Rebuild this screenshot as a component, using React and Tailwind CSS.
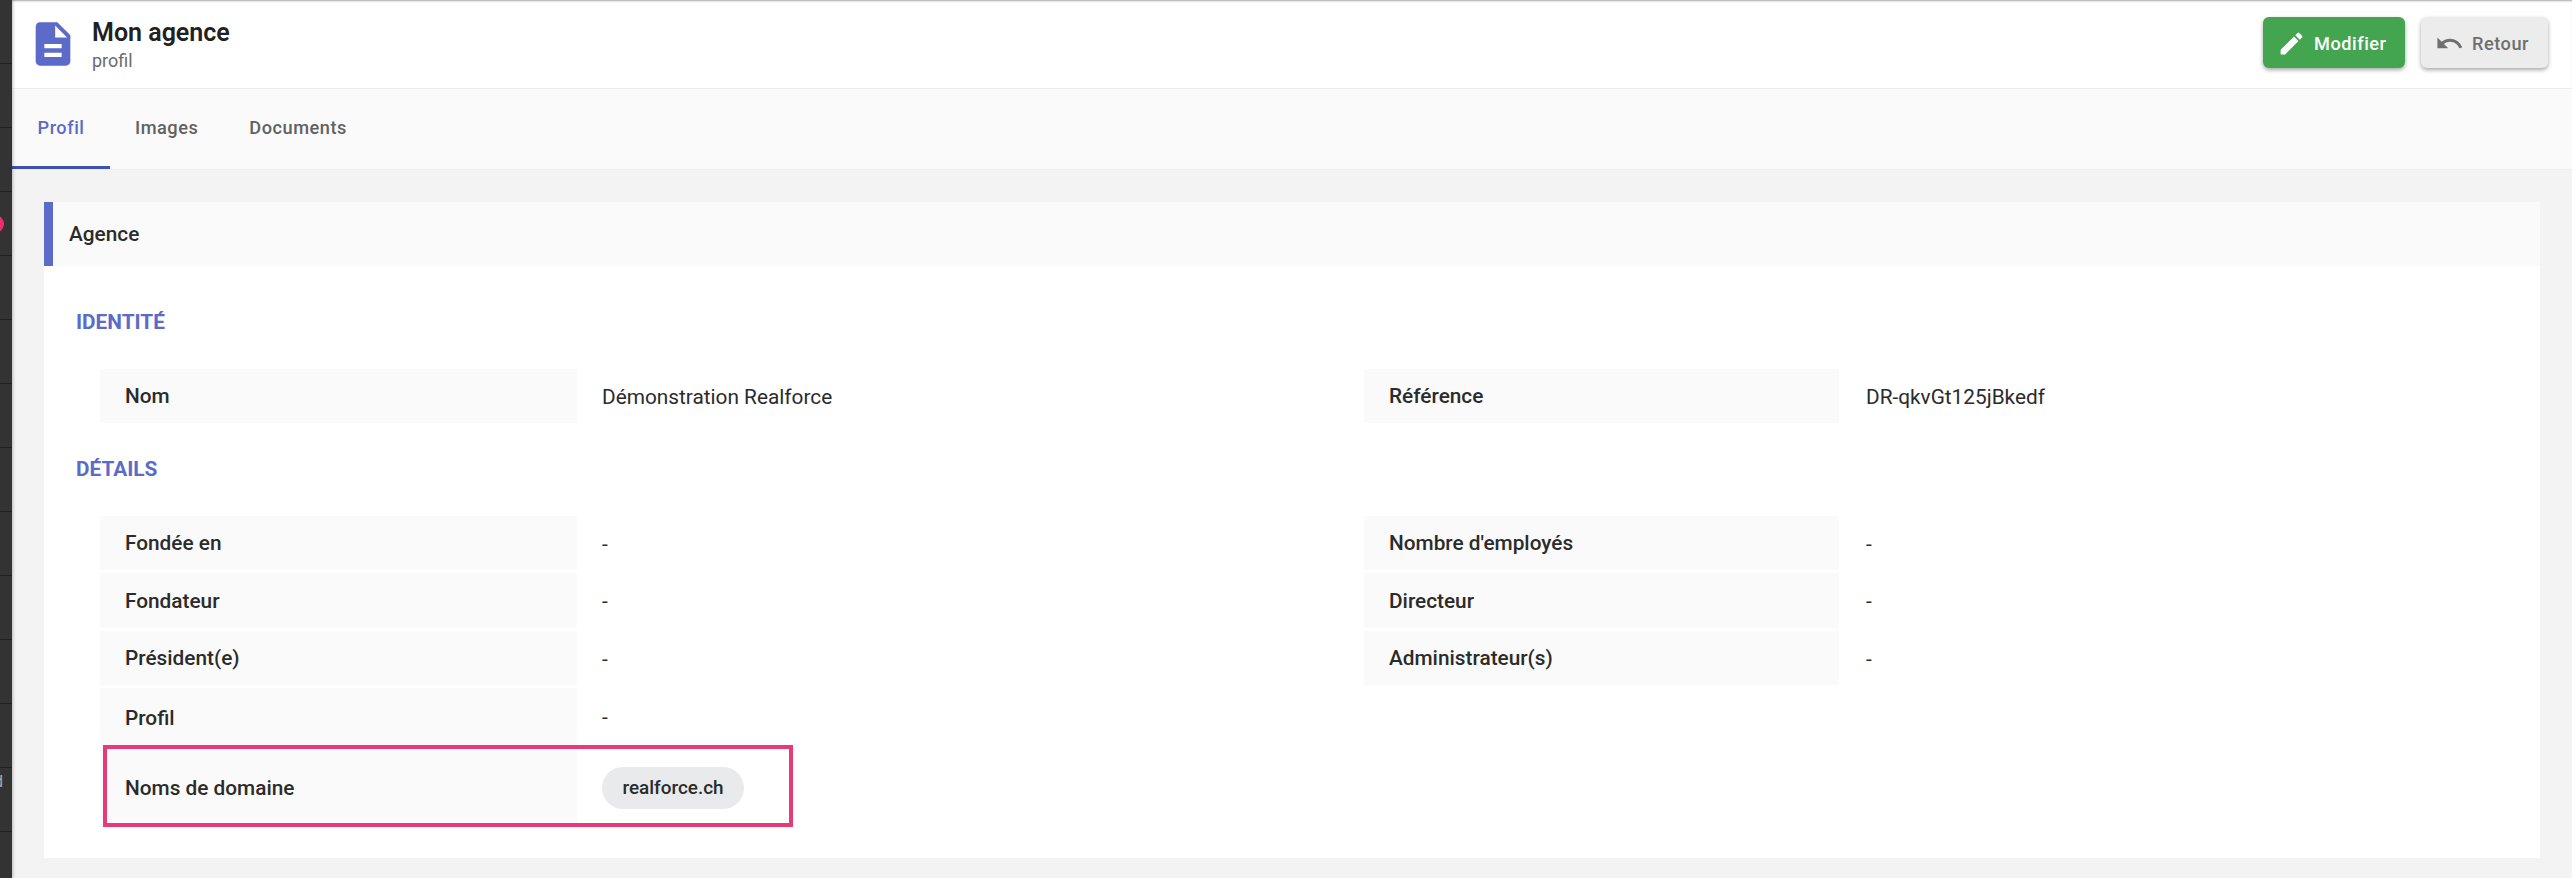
import { MdDescription, MdEdit, MdUndo } from 'react-icons/md';

const sideRows = Array.from({ length: 14 }, (_, i) => i);

function Label({ children, className = 'pt-[2px]' }) {
  return (
    <div className={`flex items-center bg-[#fafafa] pl-[25px] text-[20.8px] font-medium text-[#2b2b2b] ${className}`}>
      {children}
    </div>
  );
}

function Value({ children, className = 'pl-[25px]' }) {
  return <div className={`flex items-center pt-[3px] text-[20.8px] text-[#2b2b2b] ${className}`}>{children}</div>;
}

function SectionTitle({ children, className = '' }) {
  return (
    <h2 className={`h-[30px] pl-[32px] text-[20.8px] leading-[33px] font-bold uppercase text-[#5c6bc8] ${className}`}>
      {children}
    </h2>
  );
}

export default function App() {
  return (
    <div className="flex h-[878px] w-[2572px] overflow-hidden bg-[#f3f3f3] font-['Roboto',sans-serif]">
      {/* Sidebar */}
      <div className="relative z-10 flex w-3 shrink-0 flex-col overflow-hidden bg-[#333333] shadow-[1px_0_3px_rgba(0,0,0,0.25)]">
        {sideRows.map((i) => (
          <div key={i} className="h-16 shrink-0 border-b border-[#222222] pt-[6px] text-[16px] leading-none text-[#aaaaaa]">
            {i === 12 && <span className="-ml-[6px] block">d</span>}
          </div>
        ))}
        <div className="absolute top-[215px] -left-[14px] size-[18px] rounded-full bg-[#ec2f6c]" />
      </div>

      {/* Main */}
      <div className="flex min-w-0 flex-1 flex-col">
        <header className="flex h-[89px] shrink-0 items-center justify-between border-b border-[#ececec] bg-white pr-6 pl-[15px] shadow-[inset_0_2px_2px_-1px_rgba(0,0,0,0.35)]">
          <div className="flex items-center">
            <MdDescription className="size-[52px] text-[#5c6bc8]" />
            <div className="ml-[13px] pt-[4px]">
              <div className="text-[25px] leading-[30px] font-semibold text-[#212121]">Mon agence</div>
              <div className="text-[18px] leading-[26px] text-[#6b6b70]">profil</div>
            </div>
          </div>
          <div className="mb-[4px] flex gap-4 text-[18.2px] font-medium tracking-[0.02857em]">
            <button className="flex h-[51px] w-[142px] items-center gap-2 rounded-md bg-[#43a550] pt-[3px] pl-[14px] text-white shadow-[0_2px_4px_rgba(0,0,0,0.35)]">
              <MdEdit className="size-[29px]" />
              Modifier
            </button>
            <button className="flex h-[51px] w-[127px] items-center gap-2 rounded-md bg-[#ececec] pt-[3px] pl-[14px] text-[#6f6f6f] shadow-[0_2px_4px_rgba(0,0,0,0.35)]">
              <MdUndo className="size-[29px]" />
              Retour
            </button>
          </div>
        </header>

        {/* Tabs */}
        <nav className="flex h-[81px] shrink-0 border-b border-[#efefef] bg-[#fafafa] text-[18.2px] font-medium tracking-[0.02857em] text-[#616161]">
          <div className="flex h-[80px] w-[98px] items-center justify-center border-b-[3px] border-[#3f51b5] text-[#5c6bc8]">Profil</div>
          <div className="ml-[25px] flex items-center pb-[3px]">Images</div>
          <div className="ml-[51px] flex items-center pb-[3px]">Documents</div>
        </nav>

        {/* Card */}
        <div className="px-8 pt-8">
          <div className="h-[656px] bg-white">
            <div className="flex h-16 items-center border-l-[9px] border-[#5c6bc8] bg-[#fafafa] pt-[2px] pl-4 text-[20.8px] font-medium text-[#2b2b2b]">
              Agence
            </div>
            <div className="pt-[40px]">
              <SectionTitle>Identité</SectionTitle>
              <div className="mt-[33px] ml-[56px] grid grid-cols-[477px_787px_475px_1fr] grid-rows-[54px]">
                <Label>Nom</Label>
                <Value>Démonstration Realforce</Value>
                <Label>Référence</Label>
                <Value className="pl-[27px]">DR-qkvGt125jBkedf</Value>
              </div>
              <SectionTitle className="mt-[30px]">Détails</SectionTitle>
              <div className="relative mt-[33px] ml-[56px] grid grid-cols-[477px_787px_475px_1fr] grid-rows-[54px_55px_54px_57px_79px] gap-y-[3px]">
                <Label>Fondée en</Label>
                <Value>-</Value>
                <Label>Nombre d'employés</Label>
                <Value className="pl-[27px]">-</Value>
                <Label>Fondateur</Label>
                <Value>-</Value>
                <Label>Directeur</Label>
                <Value className="pl-[27px]">-</Value>
                <Label>Président(e)</Label>
                <Value>-</Value>
                <Label>Administrateur(s)</Label>
                <Value className="pl-[27px]">-</Value>
                <Label className="pt-[4px]">Profil</Label>
                <Value>-</Value>
                <div className="col-span-2" />
                <Label>Noms de domaine</Label>
                <div className="flex items-center pl-[25px]">
                  <span className="flex h-[42px] w-[142px] items-center justify-center rounded-full bg-[#e8eaeb] pt-[2px] text-[18.9px] font-medium text-[#2b2b2b]">
                    realforce.ch
                  </span>
                </div>
                <div className="pointer-events-none absolute bottom-0 left-[3px] h-[82px] w-[690px] border-4 border-[#e83a78]" />
              </div>
            </div>
          </div>
        </div>
      </div>
    </div>
  );
}
